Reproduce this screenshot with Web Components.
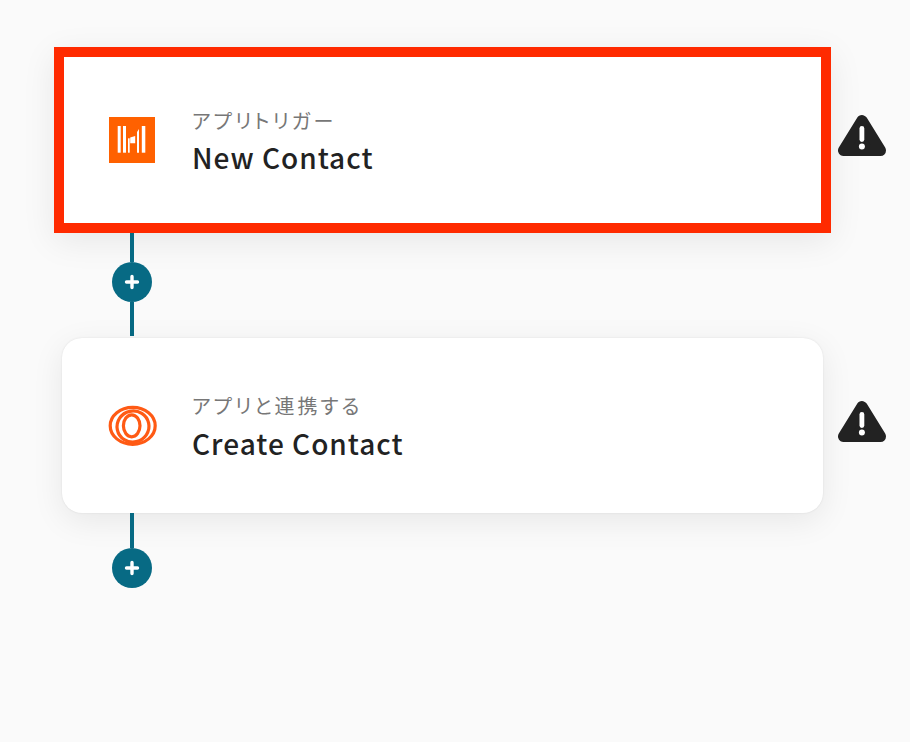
<!DOCTYPE html>
<html lang="ja"><head><meta charset="utf-8"><title>Flow</title>
<style>
html,body{margin:0;padding:0;background:#fafafa;height:100%;overflow:hidden}
body{font-family:"Noto Sans CJK JP","Noto Sans",sans-serif}
</style></head><body>
<flow-canvas>
  <flow-step selected kind="yoom" label="アプリトリガー" name="New Contact"></flow-step>
  <flow-link tail="34" after="2"></flow-link>
  <flow-step kind="loop" label="アプリと連携する" name="Create Contact"></flow-step>
  <flow-link head="35"></flow-link>
</flow-canvas>
<script>
customElements.define('flow-canvas',class extends HTMLElement{constructor(){super();this.attachShadow({mode:'open'}).innerHTML=`<style>:host{display:flex;flex-direction:column;padding:47px 0 0 54px;box-sizing:border-box;width:910px;height:742px;overflow:hidden}</style><slot></slot>`}});
const ICONS={
yoom:`<svg width="46" height="46" viewBox="0 0 46 46"><rect width="46" height="46" fill="#ff6100"/><g fill="#fff"><rect x="8.700" y="9" width="3" height="26.700"/><rect x="14" y="9" width="3" height="26.700"/><rect x="19" y="21.300" width="1.700" height="14.400"/><path d="M21.200 20.500 26.200 19v7.300h-5z"/><path d="M28 15 30 12v23.700h-2z"/><rect x="32.800" y="9" width="3.500" height="26.700"/></g></svg>`,
loop:`<svg width="48" height="40" viewBox="0 0 48 40" fill="none" stroke="#ff5a14" stroke-width="3.200" style="overflow:visible"><ellipse cx="24.700" cy="19.800" rx="22.500" ry="18.500"/><ellipse cx="25" cy="20.500" rx="16" ry="15.500" transform="rotate(-12 25 20.500)"/><ellipse cx="23.700" cy="19.800" rx="8.300" ry="11"/></svg>`
};
customElements.define('flow-step',class extends HTMLElement{constructor(){super();const s=this.hasAttribute('selected');this.attachShadow({mode:'open'}).innerHTML=`<style>
:host{display:flex;align-items:center;flex:none}
.card{box-sizing:border-box;display:flex;align-items:center;background:#fff;flex:none;
 ${s?'width:777px;height:186px;border:10px solid #ff2a00;padding-left:44px;box-shadow:0 8px 32px rgba(0,0,0,.08);':'width:761px;height:175px;margin-left:8px;border-radius:20px;padding-left:46px;box-shadow:0 0 2px rgba(0,0,0,.1),0 8px 32px rgba(0,0,0,.08);'}}
.ic{width:48px;height:48px;display:flex;align-items:center;justify-content:center;flex:none;margin-right:36px}
.tx{display:flex;flex-direction:column;gap:${s?3:4}px;padding-top:2px}
.l{font-size:20px;line-height:28px;color:#777;letter-spacing:2.9px;font-feature-settings:"palt"}
.n{font-size:28px;line-height:38px;font-weight:500;color:#222;letter-spacing:1px}
warn-mark{margin-left:${s?7:15}px}
</style><div class="card"><div class="ic">${ICONS[this.getAttribute('kind')]}</div><div class="tx"><div class="l">${this.getAttribute('label')}</div><div class="n">${this.getAttribute('name')}</div></div></div><warn-mark></warn-mark>`}});
customElements.define('warn-mark',class extends HTMLElement{constructor(){super();this.attachShadow({mode:'open'}).innerHTML=`<style>:host{display:block;flex:none;width:48px;height:44px;margin-top:-10px}svg{display:block}</style><svg width="48" height="44" viewBox="0 0 48 44"><path d="M24 7.500 L5.500 37.500 H42.500 Z" fill="#222" stroke="#222" stroke-width="11" stroke-linejoin="round"/><rect x="21.500" y="13" width="4.800" height="16" rx="2.400" fill="#fff"/><circle cx="23.900" cy="33.500" r="3" fill="#fff"/></svg>`}});
customElements.define('flow-link',class extends HTMLElement{constructor(){super();const h=this.getAttribute('head')||29,t=+this.getAttribute('tail')||0,a=+this.getAttribute('after')||0;this.attachShadow({mode:'open'}).innerHTML=`<style>
:host{display:flex;flex-direction:column;align-items:center;width:40px;margin-left:58px;flex:none;padding-bottom:${a}px}
.v{width:4px;background:#076a84}
.c{width:40px;height:40px;border-radius:50%;background:#076a84;display:flex;align-items:center;justify-content:center}
</style><div class="v" style="height:${h}px"></div><div class="c"><svg width="16" height="16" viewBox="0 0 16 16"><path d="M8 2.500v11M2.500 8h11" stroke="#fff" stroke-width="3.400" stroke-linecap="round"/></svg></div>${t?`<div class="v" style="height:${t}px"></div>`:''}`}});
</script></body></html>
